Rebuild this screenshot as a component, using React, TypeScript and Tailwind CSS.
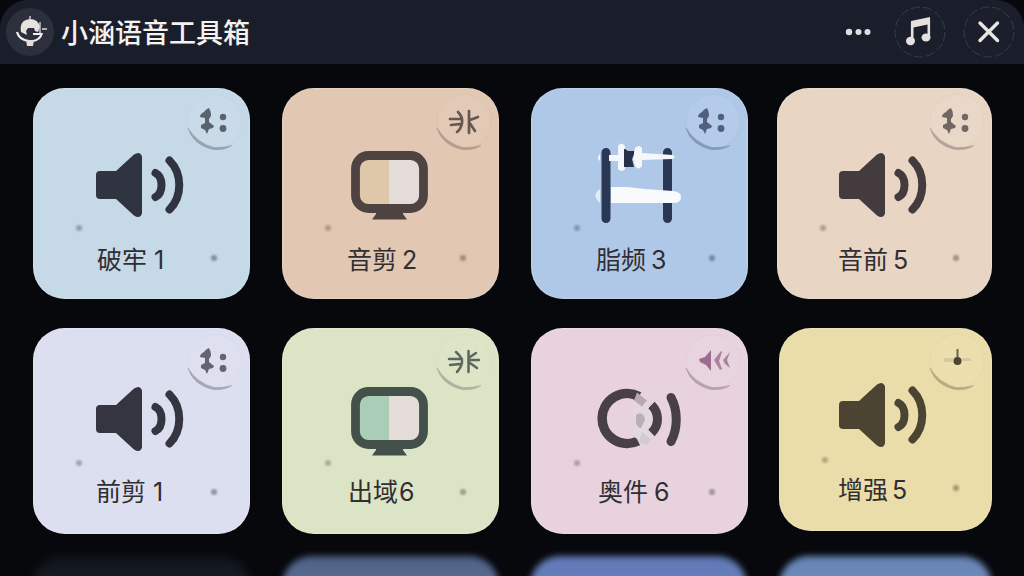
import React from 'react';

type IconKind = 'speaker' | 'monitor' | 'rack' | 'rings';
type BadgeKind = 'mix' | 'north' | 'spark' | 'rewind' | 'pin';

interface Tool {
  text: string;
  num: string;
  icon: IconKind;
  badge: BadgeKind;
  card: string;
  iconBox: string;
  label: string;
  lowDot: string;
  highDot: string;
  screen?: string;
}

const rowOne: Tool[] = [
  { text: '破牢', num: '1', icon: 'speaker', badge: 'mix', card: 'w-[217px] h-[211px] bg-[#c6d9e7] text-[#303440]', iconBox: 'mt-[55px] ml-[55px]', label: 'mt-[9px] ml-[64px] gap-[7px]', lowDot: 'top-[167px]', highDot: 'top-[137px]' },
  { text: '音剪', num: '2', icon: 'monitor', badge: 'north', card: 'ml-8 w-[217px] h-[211px] bg-[#e2c7b2] text-[#4f4342]', iconBox: 'mt-[55px] ml-[55px]', label: 'mt-[9px] ml-[65px] gap-[5px]', lowDot: 'top-[167px]', highDot: 'top-[137px]', screen: 'text-[#dfc8a9]' },
  { text: '脂频', num: '3', icon: 'rack', badge: 'mix', card: 'ml-8 w-[217px] h-[211px] bg-[#b0c8e8] text-[#2b3855]', iconBox: 'mt-[55px] ml-[55px]', label: 'mt-[9px] ml-[65px] gap-[5px]', lowDot: 'top-[167px]', highDot: 'top-[137px]' },
  { text: '音前', num: '5', icon: 'speaker', badge: 'mix', card: 'ml-[29px] w-[215px] h-[211px] bg-[#e8d5c4] text-[#443b3e]', iconBox: 'mt-[55px] ml-[54px]', label: 'mt-[9px] ml-[61px] gap-[5px]', lowDot: 'top-[167px]', highDot: 'top-[137px]' },
];

const rowTwo: Tool[] = [
  { text: '前剪', num: '1', icon: 'speaker', badge: 'mix', card: 'w-[217px] h-[206px] bg-[#dcdff0] text-[#343541]', iconBox: 'mt-[49px] ml-[55px]', label: 'mt-[7px] ml-[63px] gap-[7px]', lowDot: 'top-[161px]', highDot: 'top-[132px]' },
  { text: '出域', num: '6', icon: 'monitor', badge: 'spark', card: 'ml-8 w-[217px] h-[206px] bg-[#dbe4c4] text-[#44504a]', iconBox: 'mt-[51px] ml-[55px]', label: 'mt-[5px] ml-[66px] gap-px', lowDot: 'top-[161px]', highDot: 'top-[132px]', screen: 'text-[#aacdb8]' },
  { text: '奥件', num: '6', icon: 'rings', badge: 'rewind', card: 'ml-8 w-[217px] h-[206px] bg-[#e7d2dd] text-[#484046]', iconBox: 'mt-[49px] ml-[55px]', label: 'mt-[7px] ml-[67px] gap-[6px]', lowDot: 'top-[161px]', highDot: 'top-[132px]' },
  { text: '增强', num: '5', icon: 'speaker', badge: 'pin', card: 'ml-[31px] w-[213px] h-[203px] bg-[#eadda9] text-[#4c4432]', iconBox: 'mt-[45px] ml-[52px]', label: 'mt-[9px] ml-[59px] gap-[4px]', lowDot: 'top-[157px]', highDot: 'top-[129px]' },
];

function Speaker() {
  return (
    <>
      <path d="M12 28h16L46 11.500q6-4 8 2v57q-2 6-8 2L28 56H12q-4 0-4-4V32q0-4 4-4z" fill="currentColor" />
      <path d="M67.500 30c8 4 8 20 0 24M81.500 17.500c13 13 13 36 0 49" fill="none" stroke="currentColor" strokeWidth="8" strokeLinecap="round" />
    </>
  );
}

function Monitor({ screen }: { screen?: string }) {
  return (
    <>
      <path d="M39 68h27v3l4 5.500H35l4-5.500z" fill="currentColor" />
      <rect x="18.500" y="12.500" width="68" height="53" rx="13" fill="#e4dcd9" />
      <path d="M52 13v52H31q-12 0-12-12V25q0-12 12-12z" fill="currentColor" className={screen} />
      <rect x="18.500" y="12.500" width="68" height="53" rx="13" fill="none" stroke="currentColor" strokeWidth="8.800" />
    </>
  );
}

function Rack() {
  return (
    <>
      <path d="M14 46q-9 6 0 14z" fill="#e3edf8" />
      <path d="M20 9.500v66M81.500 9.500v66" stroke="currentColor" strokeWidth="9" strokeLinecap="round" />
      <path d="M25 44h16l18 2 28 2q8 1 8 6 0 6-8 6l-62 0z" fill="#f8fafc" />
      <path d="M14 11q-4 4 0 7zM23 12h9V3q3.500-5 7 0v23q-3 4-7 0v-8h-9z" fill="#f4f7fb" />
      <path d="M39 6l3 2h6v4l-2 4 2 8H38V6z" fill="#263147" />
      <path d="M49 5q4-4 7 0v5l31 2q3 2 0 4l-31 1v6q-4 5-7 0l-2-7z" fill="#f5f7fb" />
    </>
  );
}

function Rings() {
  return (
    <>
      <path d="M53 19.500A25 25 0 1 0 52 64" fill="none" stroke="currentColor" strokeWidth="9.500" />
      <path d="M57 20l5 7 3 6 1 8-2 12 1 9-6 5-14-9 4-11-3-12 6-9z" fill="#e2d8df" />
      <path d="M51 15.500l10 8-5 6-8-6z" fill="#b8a9b1" />
      <path d="M56 55l9 7-4 6-8-3z" fill="#d1cbd2" />
      <path d="M50 38q5-4 8 1l1 4-4 8q-5 0-5-7z" fill="#bcaeb6" />
      <path d="M65.500 28c8 8 8 20 0 28" fill="none" stroke="currentColor" strokeWidth="9" />
      <path d="M85 20.500c7 13 7 31 0 44" fill="none" stroke="currentColor" strokeWidth="9" strokeLinecap="round" />
    </>
  );
}

function ToolIcon({ tool }: { tool: Tool }) {
  return (
    <svg viewBox="0 0 100 90" className={`block h-[90px] w-[100px] shrink-0 ${tool.iconBox}`}>
      {tool.icon === 'speaker' && <Speaker />}
      {tool.icon === 'monitor' && <Monitor screen={tool.screen} />}
      {tool.icon === 'rack' && <Rack />}
      {tool.icon === 'rings' && <Rings />}
    </svg>
  );
}

function Badge({ kind }: { kind: BadgeKind }) {
  return (
    <svg viewBox="0 0 60 60" className="absolute top-1 right-[5px] size-[60px]">
      <circle cx="30" cy="29.500" r="27" fill="#fff" fillOpacity=".06" stroke="currentColor" strokeOpacity=".03" />
      <path d="M3 36q5 17 25 21.500 12 1 19-4-9 2.500-18 2Q12 51 3 36z" fill="currentColor" stroke="currentColor" strokeWidth=".6" opacity=".32" />
      {kind === 'mix' && (
        <g fill="currentColor" opacity=".72">
          <path d="M24 16q2 3 2 8l-2 3v3l5 4-1 2-4 1-2 5-2-4-4-2v-3l4-2v-5l-5-1q0-3 4-5 2-3 5-4z" />
          <circle cx="38" cy="25" r="3.200" />
          <circle cx="38" cy="36.500" r="3.400" />
        </g>
      )}
      {kind === 'north' && (
        <path d="M16 27h12M17 33l9-1M24 20q5 5 4 11t-5 9M35 19v22M36 28l8-3M35 30l6 9" fill="none" stroke="currentColor" strokeWidth="2.700" strokeLinecap="round" opacity=".85" />
      )}
      {kind === 'spark' && (
        <path d="M15 27h13M16 33l10-1M22 20q7 6 6 11t-5 9M34.500 19v21M35 28h10M36 25l6-4M36 31l7 5" fill="none" stroke="currentColor" strokeWidth="2.500" strokeLinecap="round" opacity=".85" />
      )}
      {kind === 'rewind' && (
        <g className="text-[#905b80]" fill="currentColor" opacity=".85">
          <path d="M16 27l6-2 6-7v21l-5-6-6-3z" />
          <path d="M31 28l7-9 1 1-3 9 3 8-2 1-3-5zM40 28l7-8-3 8 3 8-5-4z" opacity=".8" />
        </g>
      )}
      {kind === 'pin' && (
        <g fill="currentColor">
          <path d="M17 26h9v4h-9zM35 26h9v3h-9z" opacity=".12" />
          <path d="M29.500 17h2v10h-2z" opacity=".8" />
          <circle cx="30.500" cy="29" r="4" />
        </g>
      )}
    </svg>
  );
}

function Card({ tool }: { tool: Tool }) {
  return (
    <article className={`relative flex shrink-0 flex-col items-start rounded-[32px] shadow-[inset_0_0_1px_1px_rgba(255,255,255,0.18)] ${tool.card}`}>
      <Badge kind={tool.badge} />
      <ToolIcon tool={tool} />
      <h2 className={`flex h-9 items-center text-[25px] leading-none whitespace-nowrap ${tool.label}`}>
        <span className="text-[#302e33]">{tool.text}</span>
        <span className="text-[#302e33]">{tool.num}</span>
      </h2>
      <i className={`absolute left-[43px] size-[6px] rounded-full bg-current opacity-35 blur-[1px] ${tool.highDot}`} />
      <i className={`absolute right-[33px] size-[6px] rounded-full bg-current opacity-45 blur-[1px] ${tool.lowDot}`} />
    </article>
  );
}

function TopBar() {
  return (
    <header className="flex h-16 shrink-0 items-center rounded-t-[28px] bg-[#1a1e2b] pr-[9px] pl-[6px]">
      <svg viewBox="0 0 48 48" className="size-12">
        <circle cx="24" cy="24" r="24" fill="#2c303d" />
        <path d="M15 24q-2-12 9-13 8 0 10 8l-2 5-3-1-1-3h-6l-2 3 1 4z" fill="#e7e2df" />
        <path d="M24 8v4M36 21h5M34 14v11" stroke="#d9d9dc" strokeWidth="1.300" />
        <path d="M11 24q2 8 12 9h4q7-1 9-8" fill="none" stroke="#f0eeee" strokeWidth="2.200" />
        <path d="M20 32h8l-1 6h-6z" fill="#e5dcd7" />
        <path d="M27 26h8" stroke="#efeeee" strokeWidth="2" />
      </svg>
      <h1 className="mt-[2px] ml-[7px] text-[27px] leading-none font-medium text-[#f4f2ef]">小涵语音工具箱</h1>
      <div className="ml-auto flex items-center">
        <svg viewBox="0 0 28 8" className="mr-[21px] h-2 w-7" fill="#dedde1">
          <circle cx="4" cy="4" r="3.200" />
          <circle cx="13.500" cy="4" r="3" />
          <circle cx="22.500" cy="4" r="3" />
        </svg>
        <svg viewBox="0 0 52 52" className="mr-[17px] size-[52px]">
          <circle cx="26" cy="26" r="25" fill="#1b1f2b" stroke="#383c48" strokeWidth="1" strokeDasharray="9 3" />
          <path d="M17 15l19-4v7l-19 4z" fill="#e5e1df" />
          <path d="M18.200 17v19M34.800 13v19" stroke="#e5e1df" strokeWidth="2.600" />
          <ellipse cx="16.500" cy="35" rx="4.500" ry="4.200" fill="#e5e1df" />
          <ellipse cx="32" cy="31.500" rx="4.500" ry="4" fill="#e5e1df" />
        </svg>
        <svg viewBox="0 0 52 52" className="size-[52px]">
          <circle cx="26" cy="26" r="25" fill="#1b1f2b" stroke="#383c48" strokeWidth="1" strokeDasharray="9 3" />
          <path d="M17 17l17.500 17.500M34.500 17l-17.500 17.500" stroke="#e8e5e3" strokeWidth="3.400" strokeLinecap="round" />
        </svg>
      </div>
    </header>
  );
}

export default function App() {
  return (
    <main className="flex h-[576px] w-[1024px] flex-col overflow-hidden bg-[#06080c] font-['Inter','Noto_Sans_CJK_SC',sans-serif]">
      <TopBar />
      <section className="mt-6 ml-[33px] flex shrink-0">
        {rowOne.map((t) => <Card key={t.text} tool={t} />)}
      </section>
      <section className="mt-[29px] ml-[33px] flex h-[206px] shrink-0 items-start">
        {rowTwo.map((t) => <Card key={t.text} tool={t} />)}
      </section>
      <section className="mt-[22px] ml-[33px] flex w-[959px] shrink-0 justify-between">
        <div className="h-20 w-[217px] rounded-[30px] bg-linear-to-b from-[#11151b] to-[#232b35] blur-[4px]" />
        <div className="h-20 w-[217px] rounded-[30px] bg-linear-to-b from-[#4f6184] to-[#6981b0] blur-[3px]" />
        <div className="h-20 w-[217px] rounded-[30px] bg-linear-to-b from-[#6078b4] to-[#7590d0] blur-[3px]" />
        <div className="h-20 w-[213px] rounded-[30px] bg-linear-to-b from-[#6784b4] to-[#7899cc] blur-[3px]" />
      </section>
    </main>
  );
}
